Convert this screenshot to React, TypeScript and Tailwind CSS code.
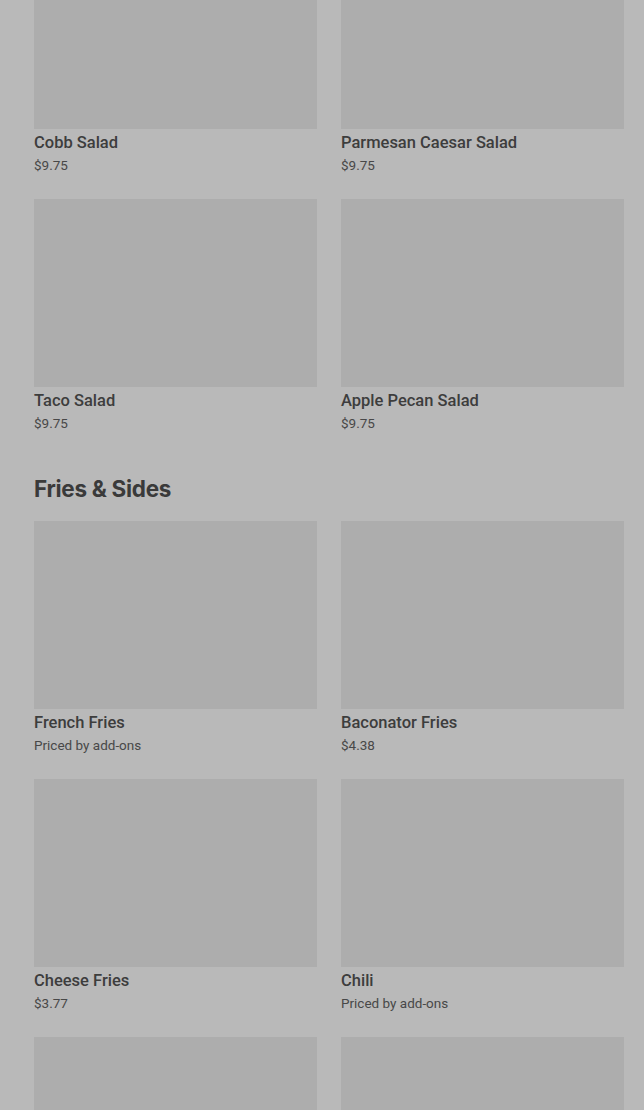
import React from 'react';

type Item = { name: string; price: string };

const salads: Item[] = [
  { name: 'Cobb Salad', price: '$9.75' },
  { name: 'Parmesan Caesar Salad', price: '$9.75' },
  { name: 'Taco Salad', price: '$9.75' },
  { name: 'Apple Pecan Salad', price: '$9.75' },
];

const sides: Item[] = [
  { name: 'French Fries', price: 'Priced by add-ons' },
  { name: 'Baconator Fries', price: '$4.38' },
  { name: 'Cheese Fries', price: '$3.77' },
  { name: 'Chili', price: 'Priced by add-ons' },
];

const MenuCard = ({ item }: { item: Item }) => (
  <div className="flex flex-col">
    <div className="h-[188px] w-full bg-[#adadad]" />
    <div className="mt-[2px] text-[16.5px] leading-6 font-medium text-[#3d3d3d]">{item.name}</div>
    <div className="text-[13.5px] leading-5 text-[#484848]">{item.price}</div>
  </div>
);

const App = () => {
  return (
    <div
      className="h-[1110px] w-full overflow-hidden bg-[#b9b9b9]"
      style={{ fontFamily: 'Roboto, "Noto Sans", sans-serif' }}
    >
      <div className="-mt-[59px] pl-[34px] pr-[20px]">
        <div className="grid grid-cols-2 gap-x-6 gap-y-6">
          {salads.map((item) => (
            <MenuCard key={item.name} item={item} />
          ))}
        </div>

        <h2
          className="mt-[40px] mb-[16px] text-[22.5px] leading-8 font-bold tracking-[-0.3px] text-[#3a3a3a]"
          style={{ fontFamily: 'Inter, "Noto Sans", sans-serif' }}
        >
          Fries &amp; Sides
        </h2>

        <div className="grid grid-cols-2 gap-x-6 gap-y-6">
          {sides.map((item) => (
            <MenuCard key={item.name} item={item} />
          ))}
          {/* next row, scrolled below the fold */}
          <div className="h-[188px] w-full bg-[#adadad]" />
          <div className="h-[188px] w-full bg-[#adadad]" />
        </div>
      </div>
    </div>
  );
};

export default App;
